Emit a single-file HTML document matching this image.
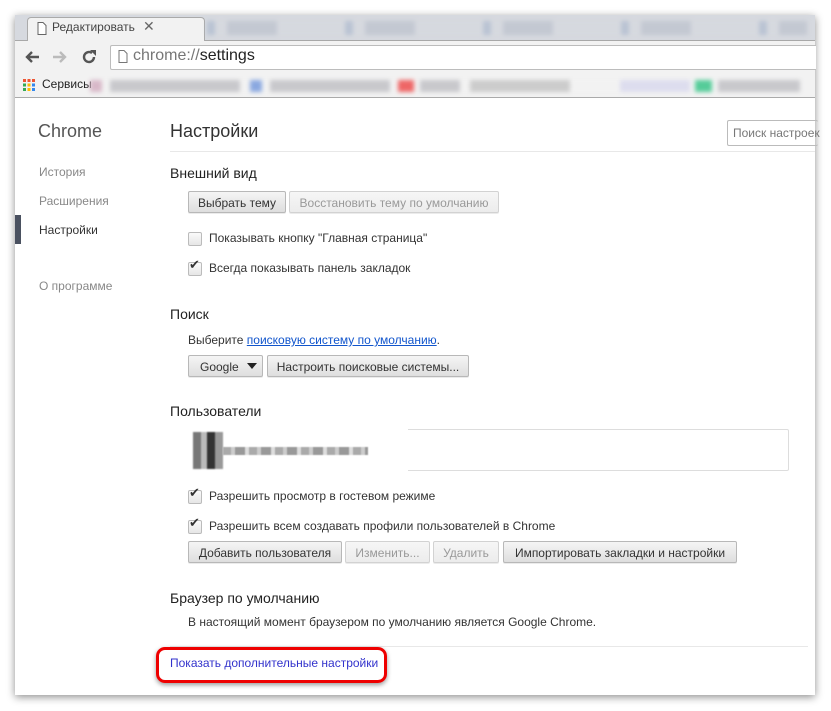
<!DOCTYPE html>
<html><head><meta charset="utf-8"><style>
body{margin:0;width:831px;height:711px;background:#fff;position:relative;overflow:hidden;font-family:"Liberation Sans","DejaVu Sans",sans-serif;}
.a{position:absolute;white-space:nowrap}
.win{position:absolute;left:15px;top:15px;width:800px;height:680px;background:#fff;box-shadow:0 2px 8px rgba(0,0,0,.45);}
.btn{position:absolute;height:22px;border:1px solid #b8b8b8;border-radius:2px;background:linear-gradient(#f5f5f5,#dedede);font-size:12px;color:#333;line-height:22px;text-align:center;box-sizing:border-box;box-shadow:0 1px 0 rgba(0,0,0,.08)}
.dis{color:#999;background:linear-gradient(#f6f6f6,#ececec);border-color:#d2d2d2}
.cb{position:absolute;width:12px;height:12px;border:1px solid #bbb;border-radius:2px;background:linear-gradient(#fafafa,#e6e6e6)}
.t{font-size:12px;color:#333}
.h{font-size:14px;color:#222}
.nav{font-size:12px;color:#888}
.blur{position:absolute;filter:blur(2px)}
</style></head><body>
<div class="win">
 <div style="position:absolute;left:0;top:0;width:800px;height:25px;background:#d6d9df;border-bottom:1px solid #a8a8a8"></div>
 <div style="position:absolute;left:12px;top:2px;width:176px;height:24px;background:#f2f2f2;border:1px solid #aaa;border-bottom:none;border-radius:4px 4px 0 0;transform:skewX(0)"></div>
 <svg class="a" style="left:22px;top:7px" width="10" height="13"><path d="M1 .5h5l3 3v9H1z" fill="#fff" stroke="#666"/></svg>
 <div class="a" style="left:37px;top:5px;font-size:12px;color:#444">Редактировать</div>
 <div class="a" style="left:128px;top:3px;font-size:14px;color:#666">✕</div>
 <div class="blur" style="left:192px;top:6px;width:600px;height:14px;background:repeating-linear-gradient(90deg,#b9c3d3 0 8px,#d6d9df 8px 20px,#c3c8d2 20px 70px,#d6d9df 70px 138px)"></div>
 <div style="position:absolute;left:0;top:26px;width:800px;height:32px;background:#f2f2f2"></div>
 <svg class="a" style="left:9px;top:35px" width="16" height="14"><path d="M15 7H3M8 2L3 7l5 5" fill="none" stroke="#555" stroke-width="2.4"/></svg>
 <svg class="a" style="left:37px;top:35px" width="16" height="14"><path d="M1 7h12M8 2l5 5-5 5" fill="none" stroke="#bbb" stroke-width="2.4"/></svg>
 <svg class="a" style="left:66px;top:34px" width="16" height="16"><path d="M13 8a5 5 0 1 1-2-4" fill="none" stroke="#555" stroke-width="2.4"/><path d="M9 1h6v6z" fill="#555"/></svg>
 <div style="position:absolute;left:95px;top:30px;width:705px;height:23px;background:#fff;border:1px solid #bcbcbc;border-right:none;border-radius:2px 0 0 2px"></div>
 <svg class="a" style="left:103px;top:35px" width="10" height="13"><path d="M1 .5h5l3 3v9H1z" fill="#fff" stroke="#777"/></svg>
 <div class="a" style="left:118px;top:32px;font-size:16px;color:#777">chrome://<span style="color:#222">settings</span></div>
 <div style="position:absolute;left:0;top:58px;width:800px;height:24px;background:#f2f2f2;border-bottom:1px solid #aaa"></div>
 <svg class="a" style="left:8px;top:64px" width="12" height="12"><g><rect x="0" y="0" width="3" height="3" fill="#e53"/><rect x="4.5" y="0" width="3" height="3" fill="#e53"/><rect x="9" y="0" width="3" height="3" fill="#e53"/><rect x="0" y="4.5" width="3" height="3" fill="#3a5"/><rect x="4.5" y="4.5" width="3" height="3" fill="#fb0"/><rect x="9" y="4.5" width="3" height="3" fill="#38e"/><rect x="0" y="9" width="3" height="3" fill="#3a5"/><rect x="4.5" y="9" width="3" height="3" fill="#fb0"/><rect x="9" y="9" width="3" height="3" fill="#38e"/></g></svg>
 <div class="a" style="left:27px;top:62px;font-size:12px;color:#222">Сервисы</div>
 <div class="blur" style="left:75px;top:65px;width:710px;height:12px;background:linear-gradient(90deg,#d8b8c8 0 12px,#f2f2f2 12px 20px,#c8c8cc 20px 150px,#f2f2f2 150px 160px,#8aa8e0 160px 172px,#f2f2f2 172px 180px,#c8c8cc 180px 300px,#f2f2f2 300px 308px,#ee6666 308px 324px,#f2f2f2 324px 330px,#c8c8cc 330px 370px,#f2f2f2 370px 380px,#ccc 380px 480px,#f2f2f2 480px 530px,#dde 530px 600px,#f2f2f2 600px 605px,#5c9 605px 622px,#f2f2f2 622px 628px,#c8c8cc 628px 700px)"></div>

 <div class="a" style="left:23px;top:106px;font-size:18px;color:#555">Chrome</div>
 <div class="a nav" style="left:24px;top:150px">История</div>
 <div class="a nav" style="left:24px;top:179px">Расширения</div>
 <div style="position:absolute;left:0;top:200px;width:6px;height:29px;background:#4a5160"></div>
 <div class="a" style="left:24px;top:208px;font-size:12px;color:#333">Настройки</div>
 <div class="a nav" style="left:24px;top:264px">О программе</div>

 <div class="a" style="left:155px;top:106px;font-size:18px;color:#333">Настройки</div>
 <div style="position:absolute;left:155px;top:136px;width:645px;height:1px;background:#e8e8e8"></div>
 <div style="position:absolute;left:712px;top:105px;width:90px;height:24px;border:1px solid #bbb;border-right:none;border-radius:2px"></div>
 <div class="a" style="left:718px;top:111px;font-size:12px;color:#777">Поиск настроек</div>

 <div class="a h" style="left:155px;top:150px">Внешний вид</div>
 <div class="btn" style="left:173px;top:176px;width:98px">Выбрать тему</div>
 <div class="btn dis" style="left:274px;top:176px;width:210px">Восстановить тему по умолчанию</div>
 <div class="cb" style="left:173px;top:217px"></div>
 <div class="a t" style="left:194px;top:216px">Показывать кнопку "Главная страница"</div>
 <div class="cb" style="left:173px;top:247px"></div><div class="a" style="left:174px;top:242px;font-size:13px;color:#333">✔</div>
 <div class="a t" style="left:194px;top:246px">Всегда показывать панель закладок</div>

 <div class="a h" style="left:155px;top:291px">Поиск</div>
 <div class="a t" style="left:173px;top:318px">Выберите <span style="color:#15c;text-decoration:underline">поисковую систему по умолчанию</span>.</div>
 <div class="btn" style="left:173px;top:340px;width:75px;text-align:left;padding-left:11px">Google</div>
 <svg class="a" style="left:232px;top:348px" width="10" height="6"><path d="M0 0h10L5 6z" fill="#222"/></svg>
 <div class="btn" style="left:252px;top:340px;width:202px">Настроить поисковые системы...</div>

 <div class="a h" style="left:155px;top:388px">Пользователи</div>
 <div style="position:absolute;left:174px;top:414px;width:598px;height:40px;border:1px solid #ddd;border-radius:2px"></div>
 <div style="position:absolute;left:173px;top:410px;width:220px;height:48px;background:#fff"></div>
 <div style="position:absolute;left:178px;top:417px;width:30px;height:37px;background:linear-gradient(90deg,#777 0 8px,#bbb 8px 14px,#333 14px 22px,#999 22px 30px);filter:blur(.8px)"></div>
 <div style="position:absolute;left:208px;top:432px;width:145px;height:8px;background:repeating-linear-gradient(90deg,#aaa 0 8px,#ccc 8px 12px,#999 12px 22px,#ddd 22px 26px);filter:blur(.6px)"></div>
 <div class="cb" style="left:173px;top:475px"></div><div class="a" style="left:174px;top:470px;font-size:13px;color:#333">✔</div>
 <div class="a t" style="left:194px;top:474px">Разрешить просмотр в гостевом режиме</div>
 <div class="cb" style="left:173px;top:505px"></div><div class="a" style="left:174px;top:500px;font-size:13px;color:#333">✔</div>
 <div class="a t" style="left:194px;top:504px">Разрешить всем создавать профили пользователей в Chrome</div>
 <div class="btn" style="left:173px;top:526px;width:154px">Добавить пользователя</div>
 <div class="btn dis" style="left:330px;top:526px;width:85px">Изменить...</div>
 <div class="btn dis" style="left:418px;top:526px;width:66px">Удалить</div>
 <div class="btn" style="left:488px;top:526px;width:234px">Импортировать закладки и настройки</div>

 <div class="a h" style="left:155px;top:575px">Браузер по умолчанию</div>
 <div class="a t" style="left:173px;top:600px">В настоящий момент браузером по умолчанию является Google Chrome.</div>
 <div style="position:absolute;left:155px;top:631px;width:638px;height:1px;background:#e8e8e8"></div>
 <div style="position:absolute;left:141px;top:632px;width:231px;height:36px;border:3px solid #e00;border-radius:9px;box-sizing:border-box;box-shadow:0 2px 5px rgba(0,0,0,.4)"></div>
 <div class="a" style="left:155px;top:641px;font-size:12px;color:#33c">Показать дополнительные настройки</div>
</div>
</body></html>
